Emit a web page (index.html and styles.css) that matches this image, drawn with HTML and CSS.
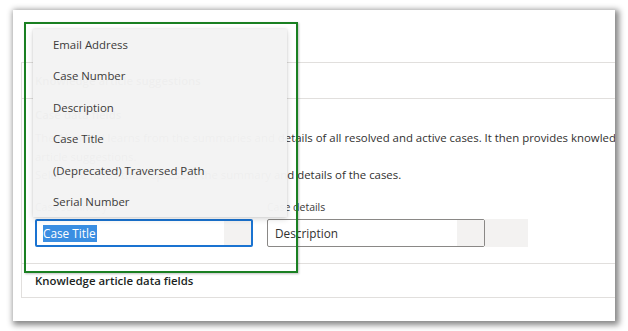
FILE: index.html
```html
<!DOCTYPE html>
<html lang="en">
<head>
<meta charset="utf-8">
<title>Case data fields</title>
<link rel="stylesheet" href="styles.css">
</head>
<body>
<div class="panel">
  <div class="card">
    <div class="row-top"><span class="row-title">Knowledge article suggestions</span></div>
    <section class="sec">
      <div class="sec-title">Case data fields</div>
      <div class="para">
        <div class="line">The AI model learns from the summaries and details of all resolved and active cases. It then provides knowledge</div>
        <div class="line">article suggestions.</div>
        <div class="line">Select the fields that represent the summary and details of the cases.</div>
      </div>
      <div class="fields">
        <div class="field">
          <div class="label">Case summary</div>
          <div class="input focus"><span class="val"><span class="sel">Case Title</span></span><span class="chev"></span></div>
        </div>
        <div class="field">
          <div class="label">Case details</div>
          <div class="input"><span class="val">Description</span><span class="chev"></span></div>
        </div>
        <div class="side-btn"></div>
      </div>
    </section>
    <div class="row-bottom">Knowledge article data fields</div>
  </div>
  <ul class="menu">
    <li>Email Address</li>
    <li>Case Number</li>
    <li>Description</li>
    <li>Case Title</li>
    <li>(Deprecated) Traversed Path</li>
    <li>Serial Number</li>
  </ul>
  <div class="annot"></div>
</div>
</body>
</html>
```
FILE: styles.css
```css
html, body {
  margin: 0;
  padding: 0;
  background: #ffffff;
}
body {
  font-family: "Open Sans", "Noto Sans", sans-serif;
  font-size: 11.4px;
  color: #323130;
  width: 628px;
  height: 331px;
  overflow: hidden;
}
.panel {
  position: relative;
  margin: 10px 0 0 13px;
  width: 602px;
  height: 311px;
  background: #ffffff;
  overflow: hidden;
  box-shadow: 2px 2px 6px 2px rgba(0, 0, 0, 0.48);
}
.card {
  margin: 52px 0 0 8px;
  width: 820px;
  border: 1px solid #e1dfdd;
}
.row-top {
  height: 35px;
  border-bottom: 1px solid #e1dfdd;
  padding-left: 13px;
  line-height: 35px;
}
.row-title {
  font-weight: 600;
}
.sec {
  height: 157px;
  padding: 7px 0 0 13px;
  border-bottom: 1px solid #e1dfdd;
}
.sec-title {
  line-height: 18px;
  font-weight: 600;
}
.para {
  margin-top: 5px;
}
.line {
  line-height: 18.5px;
  white-space: nowrap;
}
.fields {
  display: flex;
  align-items: flex-end;
  margin-top: 15.5px;
}
.field {
  width: 218px;
  margin-right: 14px;
}
.field:nth-child(2) {
  margin-right: 0;
}
.label {
  font-size: 10.5px;
  line-height: 14px;
  height: 14px;
  margin-bottom: 5px;
  color: #3b3a39;
}
.input {
  display: flex;
  height: 28px;
  box-sizing: border-box;
  border: 1px solid #8a8886;
  border-radius: 2px;
  background: #ffffff;
}
.input.focus {
  border: 2px solid #1a73d1;
}
.val {
  flex: 1;
  display: flex;
  align-items: center;
  padding-left: 7px;
  font-size: 11.8px;
  color: #323130;
}
.input.focus .val {
  padding-left: 6px;
}
.sel {
  background: #3a8ee2;
  color: #ffffff;
  line-height: 17px;
  padding: 0 1px 0 0;
}
.chev {
  width: 27px;
  background: #f3f2f1;
}
.side-btn {
  width: 43px;
  height: 28px;
  background: #f3f2f1;
}
.row-bottom {
  height: 33px;
  line-height: 33px;
  padding-left: 13px;
  font-weight: 600;
  color: #201f1e;
}
.menu {
  position: absolute;
  left: 20px;
  top: 19px;
  width: 254px;
  margin: 0;
  padding: 0;
  list-style: none;
  background: rgba(243, 243, 243, 0.975);
  box-shadow: 0 2px 6px rgba(0, 0, 0, 0.16), 0 0 2px rgba(0, 0, 0, 0.1);
}
.menu li {
  height: 31.4px;
  line-height: 31.4px;
  padding-left: 20px;
  font-size: 11.4px;
  color: #3b3a39;
  white-space: nowrap;
}
.annot {
  position: absolute;
  left: 11px;
  top: 12px;
  width: 274px;
  height: 251px;
  box-sizing: border-box;
  border: 2px solid #1a8022;
  box-shadow: 1px 1px 2px rgba(0, 0, 0, 0.25);
}
```
